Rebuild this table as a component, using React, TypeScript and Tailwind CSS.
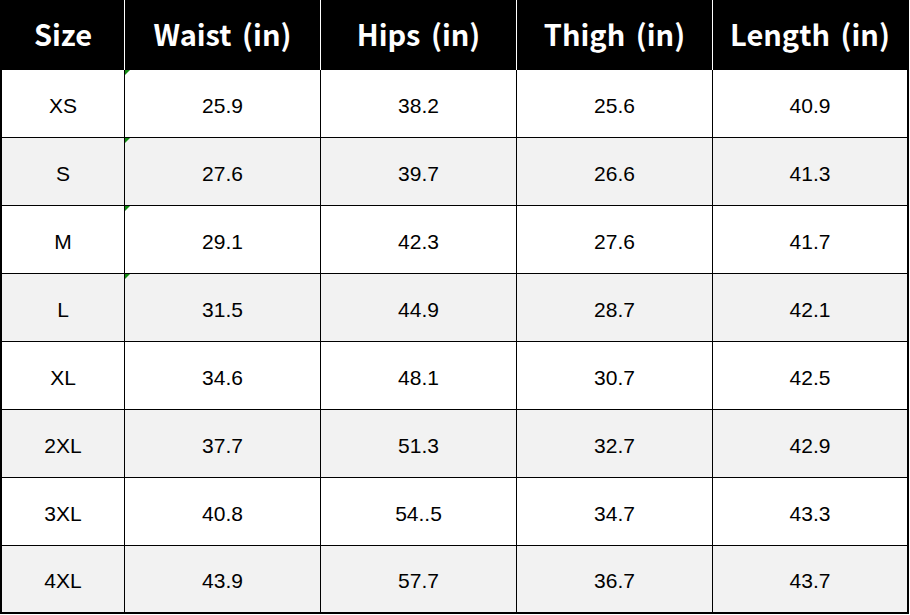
const HEADERS = ["Size", "Waist (in)", "Hips (in)", "Thigh (in)", "Length (in)"];

const ROWS: string[][] = [
  ["XS", "25.9", "38.2", "25.6", "40.9"],
  ["S", "27.6", "39.7", "26.6", "41.3"],
  ["M", "29.1", "42.3", "27.6", "41.7"],
  ["L", "31.5", "44.9", "28.7", "42.1"],
  ["XL", "34.6", "48.1", "30.7", "42.5"],
  ["2XL", "37.7", "51.3", "32.7", "42.9"],
  ["3XL", "40.8", "54..5", "34.7", "43.3"],
  ["4XL", "43.9", "57.7", "36.7", "43.7"],
];

const WIDTHS = ["w-[123px]", "w-[196px]", "w-[196px]", "w-[196px]", "w-[194px]"];

export default function App() {
  return (
    <div className="w-[910px] h-[615px] bg-white">
      <div className="w-[909px] border-l-2 border-r-2 border-black">
        {/* Header */}
        <div className="flex h-[70px] bg-black">
          {HEADERS.map((h, i) => (
            <div
              key={h}
              className={`${WIDTHS[i]} ${i < 4 ? "border-r border-white" : ""} flex items-center justify-center text-white text-[29px] font-bold pb-[2px]`}
              style={{ fontFamily: '"Noto Sans CJK KR", "Noto Sans", sans-serif', wordSpacing: "4px" }}
            >
              {h}
            </div>
          ))}
        </div>

        {/* Body */}
        {ROWS.map((row, r) => (
          <div
            key={row[0]}
            className={`flex ${r === ROWS.length - 1 ? "h-[68px] border-b-2" : "h-[68px] border-b"} border-black ${r % 2 === 1 ? "bg-[#f2f2f2]" : "bg-white"}`}
          >
            {row.map((v, i) => (
              <div
                key={i}
                className={`${WIDTHS[i]} ${i < 4 ? "border-r border-black" : ""} relative flex items-center justify-center text-black text-[21px] pt-[4px]`}
                style={{ fontFamily: '"Liberation Sans", Arial, sans-serif' }}
              >
                {i === 1 && r < 4 && (
                  <span className="absolute left-0 top-0 w-0 h-0 border-t-[5px] border-t-[#128a12] border-r-[5px] border-r-transparent" />
                )}
                {v}
              </div>
            ))}
          </div>
        ))}
      </div>
    </div>
  );
}
